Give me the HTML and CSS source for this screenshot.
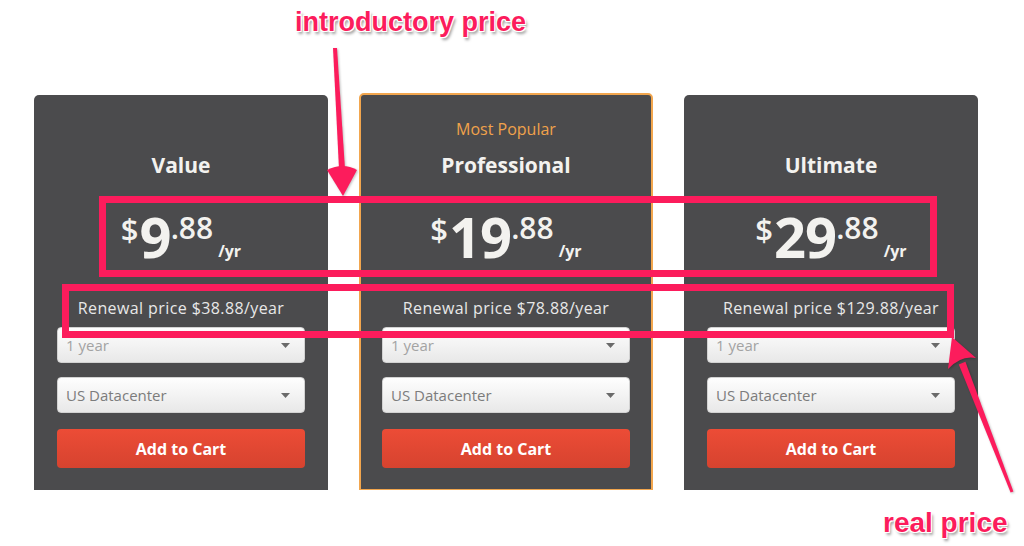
FILE: index.html
```html
<!DOCTYPE html>
<html lang="en">
  <head>
    <meta charset="UTF-8" />
    <meta name="viewport" content="width=device-width, initial-scale=1.0" />
    <title>Hosting plans</title>
    <link rel="stylesheet" href="styles.css">
  </head>
  <body>
    <div class="page">
      <div class="plans">
        <div class="plan">
          <div class="tag"></div>
          <h2 class="plan-name">Value</h2>
          <div class="price">
            <span class="cur">$</span><span class="whole">9</span><span class="cents">.88</span><span class="per">/yr</span>
          </div>
          <p class="renewal">Renewal price $38.88/year</p>
          <div class="select light">1 year <svg class="caret" width="9" height="5" viewBox="0 0 9 5"><path d="M0 0h9L4.5 5z" /></svg></div>
          <div class="select second">US Datacenter <svg class="caret" width="9" height="5" viewBox="0 0 9 5"><path d="M0 0h9L4.5 5z" /></svg></div>
          <button class="cart">Add to Cart</button>
        </div>

        <div class="plan popular">
          <div class="tag">Most Popular</div>
          <h2 class="plan-name">Professional</h2>
          <div class="price">
            <span class="cur">$</span><span class="whole">19</span><span class="cents">.88</span><span class="per">/yr</span>
          </div>
          <p class="renewal">Renewal price $78.88/year</p>
          <div class="select light">1 year <svg class="caret" width="9" height="5" viewBox="0 0 9 5"><path d="M0 0h9L4.5 5z" /></svg></div>
          <div class="select second">US Datacenter <svg class="caret" width="9" height="5" viewBox="0 0 9 5"><path d="M0 0h9L4.5 5z" /></svg></div>
          <button class="cart">Add to Cart</button>
        </div>

        <div class="plan">
          <div class="tag"></div>
          <h2 class="plan-name">Ultimate</h2>
          <div class="price">
            <span class="cur">$</span><span class="whole">29</span><span class="cents">.88</span><span class="per">/yr</span>
          </div>
          <p class="renewal">Renewal price $129.88/year</p>
          <div class="select light">1 year <svg class="caret" width="9" height="5" viewBox="0 0 9 5"><path d="M0 0h9L4.5 5z" /></svg></div>
          <div class="select second">US Datacenter <svg class="caret" width="9" height="5" viewBox="0 0 9 5"><path d="M0 0h9L4.5 5z" /></svg></div>
          <button class="cart">Add to Cart</button>
        </div>
      </div>

      <!-- annotations drawn on top of the screenshot -->
      <div class="mark mark-intro"></div>
      <div class="mark mark-real"></div>
      <svg class="arrows" width="1024" height="546" viewBox="0 0 1024 546">
        <polygon points="333,48 337,48 345,169 339,169" />
        <path d="M327,170 Q343,162 357,170 L343,196 Z" />
        <polygon points="1013.4,491.5 1010.6,492.5 958.8,364.4 965.4,361.8" />
        <path d="M976,358 Q961,355 948,369 L952,337 Z" />
      </svg>
      <div class="label label-intro">introductory price</div>
      <div class="label label-real">real price</div>
    </div>
  </body>
</html>
```

FILE: styles.css
```css
* {
  box-sizing: border-box;
}

body {
  margin: 0;
  background: #fff;
  font-family: 'Open Sans', 'Liberation Sans', sans-serif;
}

.page {
  position: relative;
  width: 1024px;
  height: 546px;
  overflow: hidden;
}

.plans {
  display: flex;
  align-items: flex-end;
  gap: 31px;
  height: 490px;
  padding-left: 34px;
}

.plan {
  display: flex;
  flex-direction: column;
  width: 294px;
  height: 395px;
  padding: 24px 23px 0;
  background: #4b4b4d;
  border-radius: 5px 5px 0 0;
  color: #f3f2ef;
  text-align: center;
}
.plan.popular {
  height: 397px;
  border: 2px solid #f2a64e;
  border-bottom-width: 1px;
  padding: 24px 21px 0;
}

.tag {
  height: 20px;
  line-height: 20px;
  font-size: 16px;
  color: #f0a24b;
}

.plan-name {
  margin: 12px 0 0;
  line-height: 28px;
  font-size: 21px;
  font-weight: 700;
}

.price {
  display: flex;
  justify-content: center;
  height: 64px;
  margin-top: 29px;
  font-weight: 700;
}
.cur {
  margin-top: 6px;
  line-height: 30px;
  font-size: 31px;
  font-weight: 600;
}
.whole {
  line-height: 56px;
  font-size: 56px;
  letter-spacing: -1px;
  margin-left: 1px;
}
.cents {
  margin-top: 5px;
  line-height: 30px;
  font-size: 30px;
  font-weight: 600;
}
.per {
  margin: 35px 0 0 5px;
  line-height: 16px;
  font-size: 16px;
}

.renewal {
  margin: 26px 0 0;
  line-height: 20px;
  font-size: 16px;
  letter-spacing: 0.4px;
  color: #e8e8e8;
}

.select {
  display: flex;
  align-items: center;
  justify-content: space-between;
  height: 36px;
  margin-top: 9px;
  padding: 0 14px 0 8px;
  background: linear-gradient(#fefefe, #e8e8e8);
  border: 1px solid #d2d2d2;
  border-radius: 4px;
  font-size: 15px;
  color: #7c7c7c;
}
.select.light {
  color: #a3a3a3;
}
.select.second {
  margin-top: 14px;
}
.caret {
  fill: #6a6a6a;
}

.cart {
  height: 39px;
  margin-top: 16px;
  border: 0;
  border-radius: 4px;
  background: linear-gradient(#ec4c36, #d6432f);
  color: #fff;
  font-family: 'Open Sans', 'Liberation Sans', sans-serif;
  font-size: 16px;
  font-weight: 700;
}

.mark {
  position: absolute;
  border: 7px solid #fc1c5c;
}
.mark-intro {
  left: 99px;
  top: 196px;
  width: 838px;
  height: 81px;
}
.mark-real {
  left: 62px;
  top: 284px;
  width: 892px;
  height: 54px;
}

.arrows {
  position: absolute;
  left: 0;
  top: 0;
  fill: #fc1c5c;
  filter: drop-shadow(1px 1px 1px rgba(0, 0, 0, 0.25));
}

.label {
  position: absolute;
  line-height: 32px;
  font-family: 'Liberation Sans', Arial, sans-serif;
  font-weight: 700;
  color: #fc1c5c;
  white-space: nowrap;
  text-shadow: 1px 1px 0 #fff, -1px -1px 0 #fff, 1px -1px 0 #fff, -1px 1px 0 #fff,
    2px 3px 3px rgba(0, 0, 0, 0.4);
}
.label-intro {
  left: 295px;
  top: 6px;
  font-size: 27px;
}
.label-real {
  left: 883px;
  top: 507px;
  font-size: 28px;
}
```
